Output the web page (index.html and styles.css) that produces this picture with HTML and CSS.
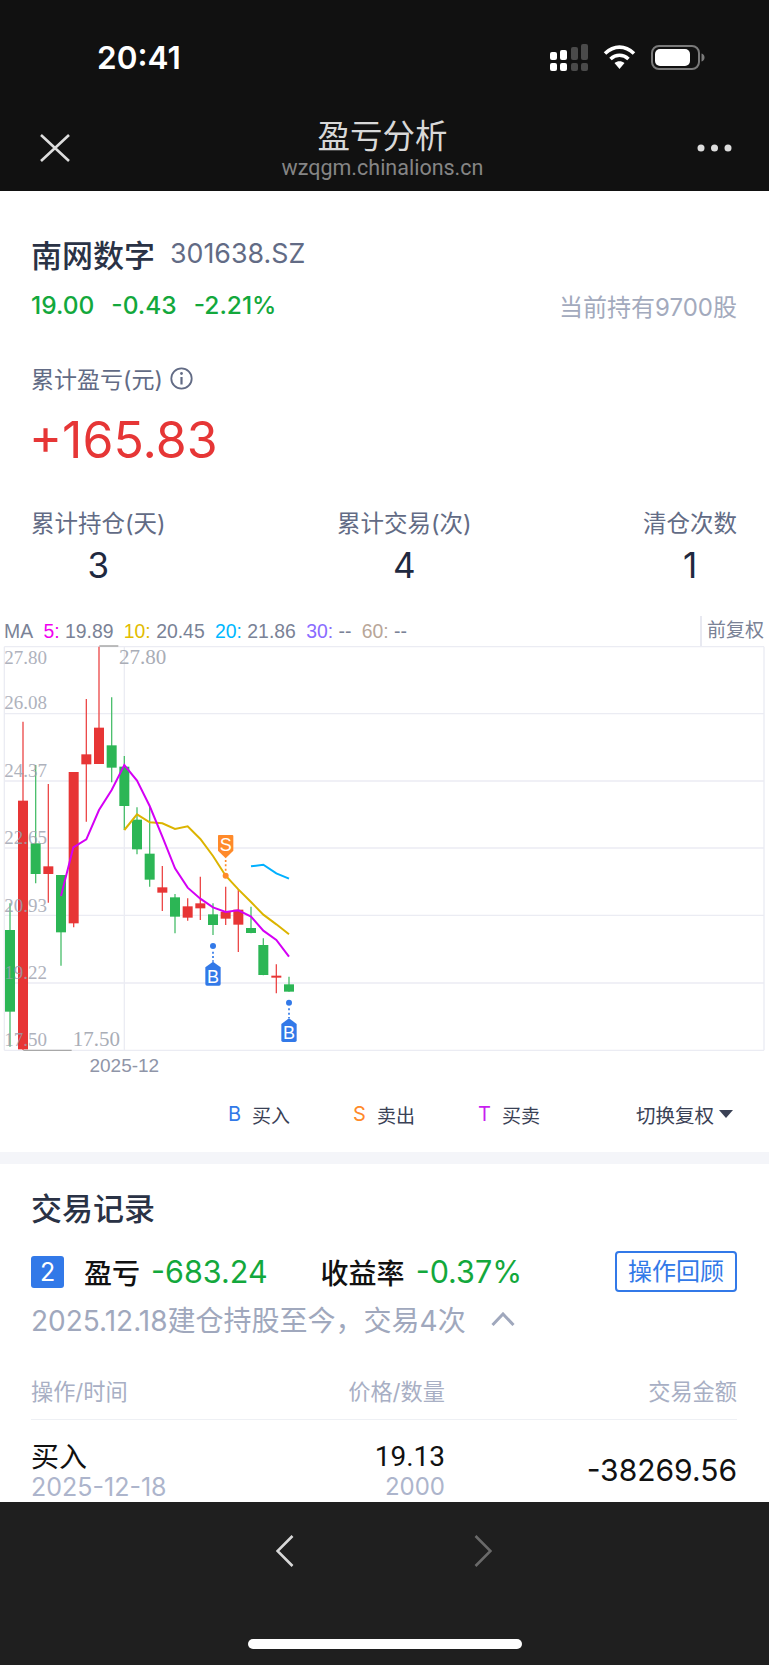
FILE: index.html
```html
<!DOCTYPE html>
<html lang="zh-CN">
<head>
	<meta charset="UTF-8">
	<title>盈亏分析</title>
	<meta name="viewport" content="width=device-width,initial-scale=1">
	<link rel="stylesheet" href="styles.css">
</head>
<body>
<div class="g-app">
	<div class="top-bar">
		<div class="status-bar">
			<div class="status-time">20:41</div>
			<div class="status-icons">
				<svg class="icon-signal" width="38" height="27" viewBox="0 0 38 27">
					<rect class="on" x="0" y="8" width="7" height="8" rx="2"/>
					<rect class="on" x="0" y="19" width="7" height="8" rx="2"/>
					<rect class="on" x="10" y="6" width="7" height="10" rx="2"/>
					<rect class="on" x="10" y="19" width="7" height="8" rx="2"/>
					<rect class="off" x="21" y="3" width="7" height="13" rx="2"/>
					<rect class="off" x="21" y="19" width="7" height="8" rx="2"/>
					<rect class="off" x="31" y="0" width="7" height="16" rx="2"/>
					<rect class="off" x="31" y="19" width="7" height="8" rx="2"/>
				</svg>
				<svg class="icon-wifi" width="33" height="24" viewBox="0 0 33 24">
					<path class="wifi-arc" d="M2 8.500C11 0 22 0 31 8.500"/>
					<path class="wifi-arc" d="M7.500 14C13 9 20 9 25.500 14"/>
					<path class="wifi-dot" d="M11.500 18C14.500 15.500 18.500 15.500 21.500 18L16.500 24Z"/>
				</svg>
				<svg class="icon-battery" width="54" height="25" viewBox="0 0 54 25">
					<rect class="batt-case" x="1" y="1" width="47" height="23" rx="7"/>
					<rect class="batt-fill" x="4" y="4" width="35" height="17" rx="5"/>
					<path class="batt-nub" d="M50.500 8.500C52.500 9 53.500 10.500 53.500 12.500C53.500 14.500 52.500 16 50.500 16.500Z"/>
				</svg>
			</div>
		</div>
		<div class="nav-bar">
			<svg class="nav-close" width="30" height="28" viewBox="0 0 30 28">
				<path d="M1 1L29 27M29 1L1 27"/>
			</svg>
			<div class="nav-title">
				<div class="nav-name">盈亏分析</div>
				<div class="nav-url">wzqgm.chinalions.cn</div>
			</div>
			<svg class="nav-more" width="35" height="8" viewBox="0 0 35 8">
				<circle cx="4" cy="4" r="3.500"/>
				<circle cx="17.500" cy="4" r="3.500"/>
				<circle cx="31" cy="4" r="3.500"/>
			</svg>
		</div>
	</div>

	<div class="page">
		<div class="summary">
			<div class="stock-name">南网数字<span class="stock-code">301638.SZ</span></div>
			<div class="stock-quote">
				<span class="green">19.00</span>
				<span class="green">-0.43</span>
				<span class="green">-2.21%</span>
				<span class="stock-hold">当前持有9700股</span>
			</div>
			<div class="profit-label">累计盈亏(元)
				<svg class="icon-info" width="23" height="23" viewBox="0 0 23 23">
					<circle cx="11.500" cy="11.500" r="10.200"/>
					<path d="M11.500 10V17.500"/>
					<circle class="info-dot" cx="11.500" cy="6.500" r="1.400"/>
				</svg>
			</div>
			<div class="profit-value">+165.83</div>
			<div class="stats">
				<div class="stat"><div class="stat-label">累计持仓(天)</div><div class="stat-value">3</div></div>
				<div class="stat"><div class="stat-label">累计交易(次)</div><div class="stat-value">4</div></div>
				<div class="stat"><div class="stat-label">清仓次数</div><div class="stat-value">1</div></div>
			</div>
		</div>

		<div class="ma-row">
			<span class="ma-item">MA</span>
			<span class="ma-item"><span class="ma5">5:</span> 19.89</span>
			<span class="ma-item"><span class="ma10">10:</span> 20.45</span>
			<span class="ma-item"><span class="ma20">20:</span> 21.86</span>
			<span class="ma-item"><span class="ma30">30:</span> --</span>
			<span class="ma-item"><span class="ma60">60:</span> --</span>
			<span class="ma-adjust">前复权</span>
		</div>

		<svg class="kline" width="769" height="435" viewBox="0 105 2307 1305">
			<g class="grid">
				<path d="M13 110H2292M13 311H2292M13 513H2292M13 714H2292M13 916H2292M13 1119H2292M13 1321H2292"/>
				<path d="M13 110V1321M373 110V1321M2292 110V1321"/>
			</g>
			<path class="mark-line" d="M298 108H355M70 1321H215"/>
			<text class="axis-date" x="373" y="1386">2025-12</text>

			<g class="down">
				<path d="M30 880V1310M107 465V820M183 795V1067M335 262V517M373 438V660M411 592V733M449 590V830M525 852V970M639 880V975M753 890V970M790 985V1096M867 1100V1145"/>
				<rect x="15" y="960" width="30" height="245"/>
				<rect x="92" y="700" width="30" height="92"/>
				<rect x="168" y="795" width="30" height="172"/>
				<rect x="320" y="406" width="30" height="67"/>
				<rect x="358" y="470" width="30" height="118"/>
				<rect x="396" y="629" width="30" height="89"/>
				<rect x="434" y="731" width="30" height="78"/>
				<rect x="510" y="862" width="30" height="58"/>
				<rect x="624" y="913" width="30" height="32"/>
				<rect x="738" y="954" width="30" height="15"/>
				<rect x="775" y="1005" width="30" height="90"/>
				<rect x="852" y="1123" width="30" height="22"/>
			</g>
			<g class="up">
				<path d="M69 335V1320M145 522V878M221 486V952M259 267V635M297 110V462M487 768V903M563 865V932M601 800V930M677 830V945M715 838V1026M829 1063V1150"/>
				<rect x="54" y="572" width="30" height="746"/>
				<rect x="130" y="769" width="30" height="23"/>
				<rect x="206" y="486" width="30" height="454"/>
				<rect x="244" y="433" width="30" height="30"/>
				<rect x="282" y="353" width="30" height="109"/>
				<rect x="472" y="832" width="30" height="16"/>
				<rect x="548" y="889" width="30" height="34"/>
				<rect x="586" y="880" width="30" height="15"/>
				<rect x="662" y="905" width="30" height="21"/>
				<rect x="700" y="899" width="30" height="45"/>
				<rect x="814" y="1097" width="30" height="6"/>
			</g>

			<g class="axis">
				<text x="13" y="162">27.80</text>
				<text x="13" y="298">26.08</text>
				<text x="13" y="500">24.37</text>
				<text x="13" y="703">22.65</text>
				<text x="13" y="905">20.93</text>
				<text x="13" y="1107">19.22</text>
				<text x="13" y="1308">17.50</text>
			</g>
			<g class="axis-big">
				<text x="357" y="162">27.80</text>
				<text x="218" y="1308">17.50</text>
			</g>

			<polyline class="line-ma20" points="753,769 790,764 829,790 867,806"/>
			<polyline class="line-ma10" points="373,660 411,613 449,637 487,640 525,657 563,649 601,687 639,738 677,797 715,838 753,876 790,914 829,943 867,973"/>
			<polyline class="line-ma5" points="183,858 220,712 259,688 297,600 335,540 373,465 411,512 449,588 487,680 525,775 563,833 601,866 639,892 677,906 715,901 753,920 790,962 829,990 867,1040"/>

			<g class="sell-mark">
				<path class="mark-dots" d="M677 750V790"/>
				<circle cx="677" cy="797" r="9"/>
				<path d="M656 675H697Q700 675 700 678V722L677 745L654 722V678Q654 675 656 675Z"/>
				<text x="677" y="724">S</text>
			</g>
			<g class="buy-mark">
				<path class="mark-dots" d="M639 1025V1055"/>
				<circle cx="639" cy="1008" r="9"/>
				<path d="M639 1055L662 1072V1122Q662 1127 657 1127H621Q616 1127 616 1122V1072Z"/>
				<text x="639" y="1118">B</text>
			</g>
			<g class="buy-mark">
				<path class="mark-dots" d="M867 1195V1225"/>
				<circle cx="867" cy="1178" r="9"/>
				<path d="M867 1225L890 1242V1291Q890 1296 885 1296H849Q844 1296 844 1291V1242Z"/>
				<text x="867" y="1287">B</text>
			</g>
		</svg>

		<div class="legend">
			<span class="legend-key blue">B</span><span class="legend-text">买入</span>
			<span class="legend-key orange">S</span><span class="legend-text">卖出</span>
			<span class="legend-key purple">T</span><span class="legend-text">买卖</span>
			<span class="legend-switch">切换复权<i class="caret"></i></span>
		</div>

		<div class="band"></div>

		<div class="records">
			<div class="records-title">交易记录</div>
			<div class="trade-head">
				<span class="trade-no">2</span>
				<span class="trade-label">盈亏</span>
				<span class="trade-num green">-683.24</span>
				<span class="trade-label trade-rate">收益率</span>
				<span class="trade-num green">-0.37%</span>
				<span class="trade-btn">操作回顾</span>
			</div>
			<div class="trade-desc">2025.12.18建仓持股至今，交易4次
				<svg class="icon-up" width="24" height="14" viewBox="0 0 24 14"><path d="M1.500 13L12 2L22.500 13"/></svg>
			</div>
			<div class="table-row table-head">
				<div>操作/时间</div>
				<div class="cell-r">价格/数量</div>
				<div class="cell-r">交易金额</div>
			</div>
			<div class="table-row table-body">
				<div>
					<div class="cell-main">买入</div>
					<div class="cell-sub cell-date">2025-12-18</div>
				</div>
				<div class="cell-r">
					<div class="cell-main cell-price">19.13</div>
					<div class="cell-sub">2000</div>
				</div>
				<div class="cell-r cell-amount">-38269.56</div>
			</div>
		</div>
	</div>

	<div class="tool-bar">
		<div class="tool-arrows">
			<svg class="arrow" width="18" height="32" viewBox="0 0 18 32"><path d="M16.500 1L1.500 16L16.500 31"/></svg>
			<svg class="arrow arrow-off" width="18" height="32" viewBox="0 0 18 32"><path d="M1.500 1L16.500 16L1.500 31"/></svg>
		</div>
		<div class="home-bar"></div>
	</div>
</div>
</body>
</html>
```

FILE: styles.css
```css
*{
	padding:0;
	margin:0;
	box-sizing:border-box;
}
body{
	width:769px;
	height:1665px;
	overflow:hidden;
	font-family:Inter,"Noto Sans CJK SC",sans-serif;
	background-color:#fff;
}
.g-app{
	display:flex;
	flex-direction:column;
	height:1665px;
}
.green{
	color:#13a83c;
}

/* top */
.top-bar{
	height:191px;
	background-color:#111;
	flex:none;
}
.status-bar{
	height:114px;
	display:flex;
	align-items:center;
	justify-content:space-between;
	padding:0 64px 0 97px;
}
.status-time{
	font-size:31.500px;
	font-weight:600;
	color:#fff;
}
.status-icons{
	display:flex;
	align-items:center;
	gap:15px;
}
.icon-signal .on{
	fill:#fff;
}
.icon-signal .off{
	fill:#4a4a4a;
}
.wifi-arc{
	fill:none;
	stroke:#fff;
	stroke-width:3.6;
}
.wifi-dot{
	fill:#fff;
}
.batt-case{
	fill:none;
	stroke:#7a7a7a;
	stroke-width:2;
}
.batt-fill{
	fill:#fff;
}
.batt-nub{
	fill:#7a7a7a;
}
.nav-bar{
	height:77px;
	display:grid;
	grid-template-columns:1fr auto 1fr;
	align-items:start;
	padding:3px 37px 0 33px;
}
.nav-close{
	margin:17px 0 0 7px;
}
.nav-close path{
	fill:none;
	stroke:#ddd;
	stroke-width:2.600;
}
.nav-title{
	text-align:center;
}
.nav-name{
	font-size:32.500px;
	line-height:40px;
	color:#d8d8d8;
}
.nav-url{
	font-family:Roboto,sans-serif;
	font-size:21.500px;
	line-height:22px;
	color:#858585;
}
.nav-more{
	justify-self:end;
	margin-top:27px;
}
.nav-more circle{
	fill:#ddd;
}

/* page */
.page{
	flex:1;
	overflow:hidden;
	background-color:#fff;
}
.summary{
	padding:42px 32px 0 31px;
}
.stock-name{
	display:flex;
	align-items:center;
	height:40px;
	font-size:31px;
	font-weight:500;
	color:#2a3245;
}
.stock-code{
	margin-left:15px;
	font-size:26.800px;
	font-weight:400;
	color:#626b85;
}
.stock-quote{
	display:flex;
	align-items:center;
	gap:17px;
	height:30px;
	margin-top:17px;
	font-size:24.500px;
	font-weight:500;
}
.stock-hold{
	margin-left:auto;
	font-size:24px;
	font-weight:400;
	color:#a3aabd;
}
.profit-label{
	display:flex;
	align-items:center;
	gap:7px;
	height:30px;
	margin-top:43px;
	font-size:23px;
	color:#626b85;
}
.icon-info circle{
	fill:none;
	stroke:#626b85;
	stroke-width:1.800;
}
.icon-info circle.info-dot{
	fill:#626b85;
	stroke:none;
}
.icon-info path{
	stroke:#626b85;
	stroke-width:2.200;
}
.profit-value{
	height:60px;
	line-height:60px;
	margin:17px 0 0 -2px;
	font-size:50px;
	color:#e63636;
}
.stats{
	display:flex;
	justify-content:space-between;
	margin-top:39px;
}
.stat{
	text-align:center;
}
.stat-label{
	height:30px;
	line-height:30px;
	font-size:23.500px;
	color:#626b85;
}
.stat-value{
	height:40px;
	line-height:40px;
	margin:6px 0 2px;
	font-size:35px;
	color:#1f2940;
}

/* chart */
.ma-row{
	display:flex;
	align-items:center;
	gap:10.300px;
	height:30px;
	margin-top:28px;
	padding:2px 0 0 4px;
	font-family:"Liberation Sans","Noto Sans CJK SC",sans-serif;
	font-size:19.400px;
	color:#7a8296;
}
.ma5{
	color:#f000f0;
}
.ma10{
	color:#e2bc00;
}
.ma20{
	color:#00b8ff;
}
.ma30{
	color:#8a6cff;
}
.ma60{
	color:#b8a698;
}
.ma-adjust{
	margin-left:auto;
	padding:0 5px 0 5px;
	height:30px;
	line-height:30px;
	font-size:19px;
	border-left:2px solid #e8e9f1;
}
.kline{
	display:block;
}
.grid path{
	fill:none;
	stroke:#ebecf3;
	stroke-width:4;
}
.mark-line{
	fill:none;
	stroke:#a8a8a8;
	stroke-width:4;
}
.axis text{
	font-family:"Liberation Serif",serif;
	font-size:57px;
	fill:#9ba0ad;
	opacity:.8;
}
.axis-big text{
	font-family:"Liberation Serif",serif;
	font-size:63px;
	fill:#a9adb6;
}
.axis-date{
	font-family:"Liberation Sans",sans-serif;
	font-size:57px;
	fill:#8f95a8;
	text-anchor:middle;
}
.down rect{
	fill:#2cb655;
}
.down path{
	fill:none;
	stroke:#4cbf6e;
	stroke-width:4;
}
.up rect{
	fill:#e73535;
}
.up path{
	fill:none;
	stroke:#ec4a4a;
	stroke-width:4;
}
.line-ma5,.line-ma10,.line-ma20{
	fill:none;
	stroke-width:6;
}
.line-ma5{
	stroke:#d400f5;
}
.line-ma10{
	stroke:#dcb400;
}
.line-ma20{
	stroke:#00b0ff;
}
.mark-dots{
	fill:none;
	stroke-width:5;
	stroke-dasharray:6 7;
}
.sell-mark circle,.sell-mark path{
	fill:#ff8a2a;
}
.sell-mark .mark-dots{
	fill:none;
	stroke:#ff8a2a;
}
.buy-mark circle,.buy-mark path{
	fill:#3279e8;
}
.buy-mark .mark-dots{
	fill:none;
	stroke:#3279e8;
}
.sell-mark text,.buy-mark text{
	font-family:"Liberation Sans",sans-serif;
	font-size:54px;
	fill:#fff;
	text-anchor:middle;
}
.legend{
	display:flex;
	align-items:center;
	height:30px;
	margin-top:19px;
	padding:0 36px 0 228px;
	font-size:19px;
	color:#3a4155;
}
.legend-key{
	width:24px;
	font-size:20px;
}
.legend-text{
	width:101px;
}
.blue{
	color:#3279e8;
}
.orange{
	color:#ff8a2a;
}
.purple{
	color:#c81ef0;
}
.legend-switch{
	display:flex;
	align-items:center;
	margin-left:auto;
	font-size:19.500px;
}
.caret{
	width:0;
	height:0;
	margin-left:5px;
	border-left:7px solid transparent;
	border-right:7px solid transparent;
	border-top:8px solid #3a4155;
}
.band{
	height:12px;
	margin-top:23px;
	background-color:#f4f5f9;
}

/* records */
.records{
	padding:25px 32px 0 31px;
}
.records-title{
	height:40px;
	line-height:40px;
	font-size:31px;
	font-weight:500;
	color:#2a3245;
}
.trade-head{
	display:flex;
	align-items:center;
	height:41px;
	margin-top:22px;
}
.trade-no{
	width:33px;
	height:32px;
	line-height:32px;
	margin-right:20px;
	border-radius:3px;
	text-align:center;
	font-size:25px;
	color:#fff;
	background-color:#3279e8;
}
.trade-label{
	font-size:28px;
	font-weight:500;
	color:#111;
}
.trade-rate{
	margin-left:53px;
}
.trade-num{
	margin-left:11px;
	font-size:30.500px;
}
.trade-btn{
	margin-left:auto;
	width:122px;
	height:41px;
	line-height:37px;
	border:2px solid #3279e8;
	border-radius:4px;
	text-align:center;
	font-size:24px;
	color:#3279e8;
}
.trade-desc{
	display:flex;
	align-items:center;
	gap:25px;
	height:30px;
	margin-top:12px;
	font-size:28px;
	color:#a0a8bd;
}
.icon-up path{
	fill:none;
	stroke:#a0a8bd;
	stroke-width:3;
}
.table-row{
	display:grid;
	grid-template-columns:266px 148px 1fr;
}
.cell-r{
	text-align:right;
}
.table-head{
	height:43px;
	line-height:30px;
	margin-top:43px;
	border-bottom:1px solid #eef0f4;
	font-size:22.200px;
	color:#a8afc4;
}
.table-body{
	padding-top:20px;
	align-items:center;
}
.cell-main{
	height:34px;
	line-height:34px;
	font-size:28px;
	color:#111;
}
.cell-price{
	font-family:Roboto,sans-serif;
}
.cell-sub{
	height:26px;
	line-height:26px;
	font-size:24px;
	color:#adb5cc;
}
.cell-date{
	font-size:25px;
}
.cell-amount{
	font-size:30px;
	color:#111;
}

/* bottom */
.tool-bar{
	height:163px;
	flex:none;
	padding-top:33px;
	background-color:#1f1f1f;
}
.tool-arrows{
	display:flex;
	justify-content:center;
	gap:180px;
	margin-left:-1px;
}
.arrow path{
	fill:none;
	stroke:#d8d8d8;
	stroke-width:2.600;
}
.arrow-off path{
	stroke:#6a6a6a;
}
.home-bar{
	width:274px;
	height:10px;
	margin:72px auto 0;
	border-radius:5px;
	background-color:#fff;
}
```
